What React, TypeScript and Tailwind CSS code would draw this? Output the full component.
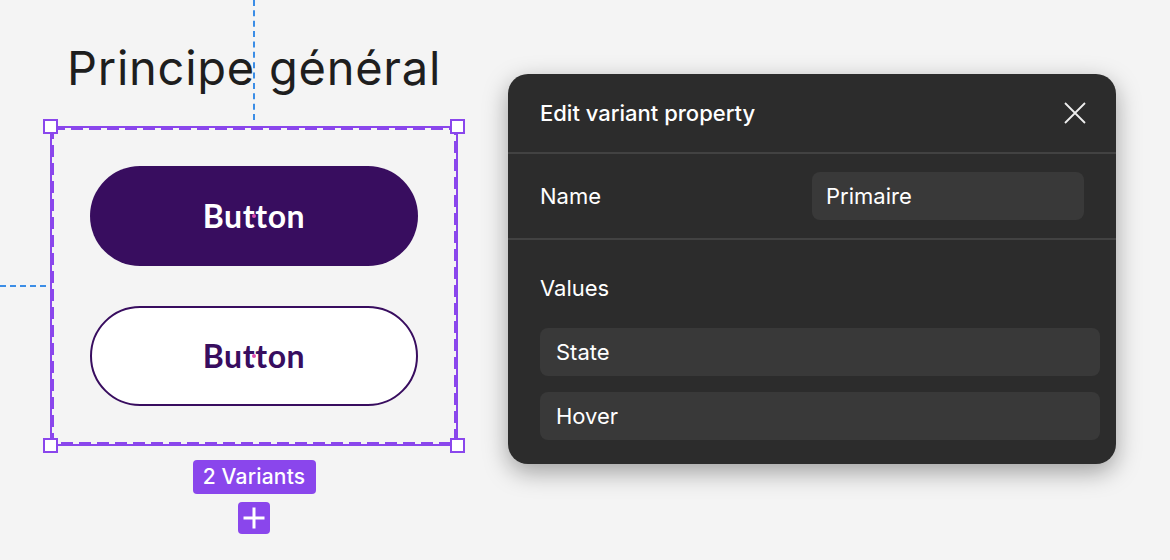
const PURPLE = 'bg-[#8a46ec]'

function Handle({ pos }: { pos: string }) {
  return <div className={`absolute h-[15px] w-[15px] border-2 border-[#8a46ec] bg-white ${pos}`} />
}

function VariantButton({ filled }: { filled: boolean }) {
  return (
    <div
      className={
        filled
          ? 'relative flex h-[100px] w-[328px] items-center justify-center rounded-full bg-[#380d5f] text-white'
          : 'relative flex h-[100px] w-[328px] items-center justify-center rounded-full border-2 border-[#380d5f] bg-white text-[#380d5f]'
      }
    >
      <span className="font-['Lato'] text-[32px] font-bold tracking-[0.6px]">Button</span>
      <span className="absolute left-1/2 top-1/2 h-[4px] w-[4px] -translate-x-1/2 -translate-y-1/2 rounded-full bg-[#e04bb0]" />
    </div>
  )
}

export default function App() {
  return (
    <div className="relative flex h-[560px] w-[1170px] overflow-hidden bg-[#f4f4f4] font-['Inter',sans-serif]">
      {/* guides */}
      <div className="absolute left-[253px] top-0 h-[120px] border-l-2 border-dashed border-[#3b8de6]" />
      <div className="absolute left-0 top-[285px] w-[46px] border-t-2 border-dashed border-[#3b8de6]" />

      <div className="ml-[50px] flex w-[408px] flex-col items-center">
        <div className="flex h-[126px] items-start pt-[39px]">
          <h1 className="text-[47px] leading-[58px] font-normal text-[#1e1e1e] tracking-[0.75px]">Principe général</h1>
        </div>

        <div className="relative h-[320px] w-[408px] border-2 border-[#8a46ec]">
          <svg className="absolute inset-0 h-full w-full" viewBox="0 0 404 316" preserveAspectRatio="none">
            <rect x="1" y="1" width="402" height="314" fill="none" stroke="#8a46ec" strokeWidth="2" strokeDasharray="12 6" />
          </svg>
          <div className="relative flex h-full w-full flex-col items-center gap-[40px] pt-[38px]">
            <VariantButton filled />
            <VariantButton filled={false} />
          </div>
          <Handle pos="-left-[9px] -top-[9px]" />
          <Handle pos="-right-[9px] -top-[9px]" />
          <Handle pos="-left-[9px] -bottom-[9px]" />
          <Handle pos="-right-[9px] -bottom-[9px]" />
        </div>

        <div className={`mt-[14px] flex h-[34px] w-[123px] items-center justify-center rounded-[4px] ${PURPLE} text-[21px] font-medium tracking-[0.2px] text-white`}>
          2 Variants
        </div>
        <div className={`mt-[8px] flex h-[32px] w-[32px] items-center justify-center rounded-[4px] ${PURPLE}`}>
          <svg width="24" height="24" viewBox="0 0 24 24">
            <path d="M12 1.5V22.5M1.5 12H22.5" stroke="white" strokeWidth="3" />
          </svg>
        </div>
      </div>

      <div className="ml-[50px] mt-[74px] flex h-[390px] w-[608px] flex-col rounded-[20px] bg-[#2c2c2c] text-white shadow-[0_8px_24px_rgba(0,0,0,0.35)]">
        <div className="flex h-[78px] items-center justify-between pl-[32px] pr-[30px]">
          <span className="text-[22px] font-medium">Edit variant property</span>
          <svg width="22" height="22" viewBox="0 0 22 22">
            <path d="M1 1L21 21M21 1L1 21" stroke="#eeeeee" strokeWidth="1.8" />
          </svg>
        </div>
        <div className="h-[2px] bg-[#424242]" />
        <div className="flex h-[84px] items-center justify-between px-[32px]">
          <span className="text-[22px]">Name</span>
          <div className="flex h-[48px] w-[272px] items-center rounded-[8px] bg-[#393939] px-[14px] text-[22px]">Primaire</div>
        </div>
        <div className="h-[2px] bg-[#424242]" />
        <div className="flex flex-col pl-[32px] pr-[16px] pt-[36px]">
          <span className="text-[22px] leading-[24px]">Values</span>
          <div className="mt-[28px] flex flex-col gap-[16px]">
            <div className="flex h-[48px] items-center rounded-[8px] bg-[#393939] px-[16px] text-[22px]">State</div>
            <div className="flex h-[48px] items-center rounded-[8px] bg-[#393939] px-[16px] text-[22px]">Hover</div>
          </div>
        </div>
      </div>
    </div>
  )
}
